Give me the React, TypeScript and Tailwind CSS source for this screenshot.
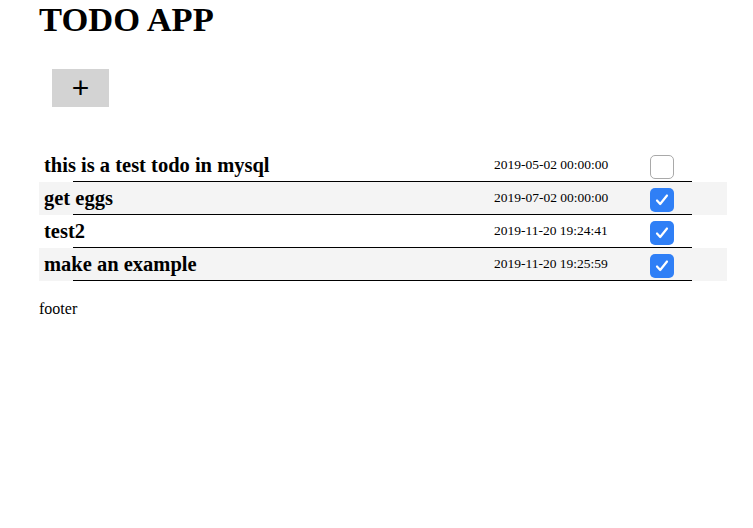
import React from 'react';

interface Todo {
  title: string;
  date: string;
  done: boolean;
}

const todos: Todo[] = [
  { title: 'this is a test todo in mysql', date: '2019-05-02 00:00:00', done: false },
  { title: 'get eggs', date: '2019-07-02 00:00:00', done: true },
  { title: 'test2', date: '2019-11-20 19:24:41', done: true },
  { title: 'make an example', date: '2019-11-20 19:25:59', done: true },
];

const Checkbox = ({ checked }: { checked: boolean }): React.JSX.Element =>
  checked ? (
    <span className="mt-[3px] flex h-[24px] w-[24px] items-center justify-center rounded-[5px] bg-[#2f7ff6]">
      <svg width="16" height="16" viewBox="0 0 16 16" fill="none">
        <path d="M3 8.5l3.2 3.5L13 3.5" stroke="white" strokeWidth="2.2" strokeLinecap="round" strokeLinejoin="round" />
      </svg>
    </span>
  ) : (
    <span className="mt-[3px] block h-[24px] w-[24px] rounded-[5px] border border-[#a9a9a9] bg-white" />
  );

export default function App(): React.JSX.Element {
  return (
    <div className="min-h-[528px] bg-white px-[39px] text-black font-['Liberation_Serif',serif]">
      <h1 className="pt-px text-[34.5px] font-bold leading-[37px]">TODO APP</h1>

      <button
        type="button"
        className="ml-[13px] mt-[31px] flex h-[38px] w-[57px] items-center justify-center bg-[#d3d3d3] font-['Liberation_Sans',sans-serif] text-[30px] font-light leading-none"
      >
        +
      </button>

      {/* Todo list */}
      <div className="mt-[42px] w-[688px]">
        {todos.map((todo, i) => (
          <div key={todo.title} className={i % 2 === 1 ? 'bg-[#f4f4f4]' : ''}>
            <div className="flex h-[32px] items-center">
              <div className="w-[455px] pl-[5px] text-[20.5px] font-bold">{todo.title}</div>
              <div className="w-[156px] text-[13.5px]">{todo.date}</div>
              <Checkbox checked={todo.done} />
            </div>
            <div className="ml-[34px] h-px w-[619px] bg-black" />
          </div>
        ))}
      </div>

      <p className="mt-[16px] text-[16px]">footer</p>
    </div>
  );
}
